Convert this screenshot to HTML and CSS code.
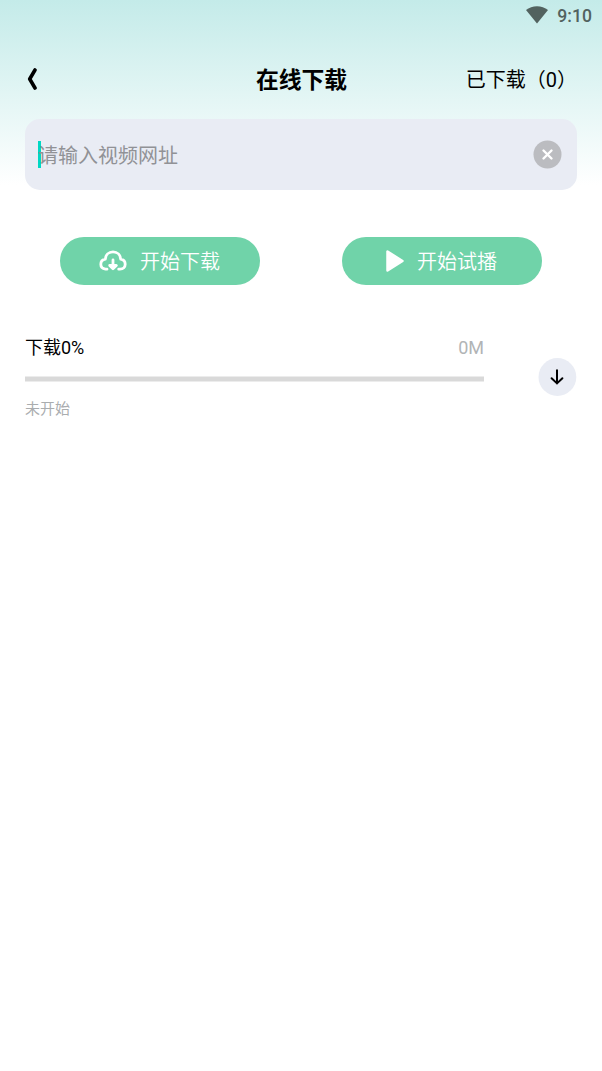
FILE: index.html
```html
<!DOCTYPE html>
<html lang="zh-CN">
<head>
<meta charset="utf-8">
<title>在线下载</title>
<link rel="stylesheet" href="styles.css">
</head>
<body>
<div class="status">
  <svg class="wifi" width="22" height="18" viewBox="0 0 22 18"><path d="M0 4C6-1.1 16-1.1 22 4L11 17.6Z"/></svg>
  <span class="clock">9:10</span>
</div>
<header class="header">
  <svg class="back" width="10" height="24" viewBox="0 0 10 24"><path d="M8 3 2.7 12 8 21"/></svg>
  <h1 class="title">在线下载</h1>
  <span class="downloaded">已下载（0）</span>
</header>
<main class="content">
  <div class="field">
    <span class="caret"></span>
    <span class="placeholder">请输入视频网址</span>
    <svg class="clear" width="29" height="29" viewBox="0 0 29 29"><circle cx="14.5" cy="14.5" r="14"/><path d="m10.5 10.5 8 8M18.500 10.5l-8 8"/></svg>
  </div>
  <div class="actions">
    <button class="button">
      <svg class="cloud" width="28" height="22" viewBox="0 0 28 22"><path d="M8 19.2H6.500C3.6 18.800 1.8 16.8 1.8 14.3c0-2.6 1.9-4.7 4.5-5.1C6.5 5 9.6 1.8 14 1.8s7.5 3.2 7.7 7.4c2.6.4 4.5 2.5 4.5 5.1 0 2.8-2 4.9-5.2 4.9h-1.3M14 10v8M10.7 15.500l3.3 3.200 3.300-3.200Z"/></svg>
      <span class="label">开始下载</span>
    </button>
    <button class="button">
      <svg class="play" width="18" height="22" viewBox="0 0 18 22"><path d="M1.5 1.5v19L16.5 11Z"/></svg>
      <span class="label">开始试播</span>
    </button>
  </div>
  <section class="task">
    <div class="info">
      <div class="line"><span>下载0%</span><span class="size">0M</span></div>
      <svg class="bar" width="459" height="7" viewBox="0 0 459 7"><rect y="1.5" width="459" height="5"/></svg>
      <div class="state">未开始</div>
    </div>
    <svg class="start" width="39" height="38" viewBox="0 0 39 38"><circle cx="19.4" cy="19" r="18.9"/><path d="M19 12.2V25.4M13.6 20.2l5.4 5.2 5.4-5.2"/></svg>
  </section>
</main>
</body>
</html>
```
FILE: styles.css
```css
* { box-sizing: border-box; }
body {
  margin: 0;
  min-height: 1071px;
  background: #fff linear-gradient(#c4ebe9, #fff) no-repeat 0 0 / 100% 185px;
  font-family: Roboto, "Noto Sans CJK SC", sans-serif;
  color: #000;
}
svg { display: block; flex: none; }
.status {
  height: 32px;
  padding-right: 10px;
  display: flex;
  justify-content: flex-end;
  align-items: center;
  gap: 9px;
  color: #52625f;
}
.wifi { fill: #52625f; margin-top: -2px; }
.clock { font-size: 17.6px; font-weight: 500; line-height: 32px; }
.header {
  height: 87.4px;
  padding: 0 25px 0 26px;
  display: grid;
  grid-template-columns: 1fr auto 1fr;
  align-items: center;
}
.back { margin: 7px 0 0 1px; fill: none; stroke: #000; stroke-width: 3.6; stroke-linecap: round; stroke-linejoin: round; }
.title { margin: 11px 0 0; font-size: 22.8px; font-weight: 700; line-height: 32px; }
.downloaded { justify-self: end; margin-top: 9px; font-size: 20px; line-height: 30px; }
.content { padding: 0 25px; }
.field {
  height: 70.6px;
  padding: 0 15px 0 13px;
  display: flex;
  align-items: center;
  border-radius: 15px;
  background: #e9ecf4;
}
.caret { width: 3px; height: 27px; margin-right: -3px; margin-top: -1px; background: #00d8c4; }
.placeholder { position: relative; padding-top: 3px; font-size: 20px; color: #919296; line-height: 30px; }
.clear { margin: -1px 0 0 auto; fill: #bbbcc0; }
.clear path { fill: none; stroke: #fff; stroke-width: 2.4; stroke-linecap: round; }
.actions { display: flex; justify-content: space-between; padding: 47px 35px 0; }
.button {
  width: 200px;
  height: 48px;
  padding: 0 1px 0 0;
  border: 0;
  border-radius: 24px;
  display: flex;
  align-items: center;
  justify-content: center;
  gap: 13px;
  background: #70d3a9;
  color: #fff;
  font: 350 20px/30px Roboto, "Noto Sans CJK SC", sans-serif;
}
.label { padding-top: 2px; }
.cloud { margin-top: 1px; fill: none; stroke: #fff; stroke-width: 2.8; stroke-linecap: round; stroke-linejoin: round; }
.play { fill: #fff; stroke: #fff; stroke-width: 2.5; stroke-linejoin: round; }
.task { display: flex; justify-content: space-between; padding-top: 50px; }
.info { width: 459px; }
.line { display: flex; justify-content: space-between; font-size: 18px; line-height: 26px; }
.size { color: #b1b4b6; }
.bar { margin-top: 14px; fill: #d9d9d9; }
.state { margin-top: 16px; font-size: 15px; line-height: 22px; color: #aaadaf; }
.start { margin: 23px 0 0; fill: #e9ecf4; }
.start path { fill: none; stroke: #000; stroke-width: 2; stroke-linecap: round; stroke-linejoin: round; }
```
